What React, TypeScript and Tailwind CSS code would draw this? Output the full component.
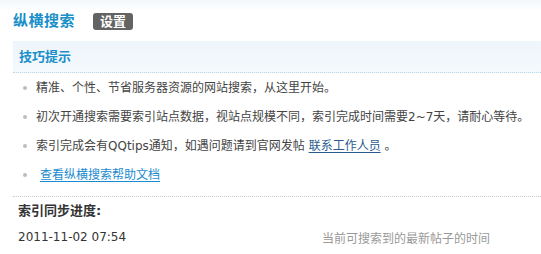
const tips = [
   "精准、个性、节省服务器资源的网站搜索，从这里开始。",
   "初次开通搜索需要索引站点数据，视站点规模不同，索引完成时间需要2~7天，请耐心等待。",
];

const Bullet = () => (
   <span className="w-[4px] h-[4px] rounded-full bg-[#bdbdbd] shrink-0 ml-[10px] mr-[9px]" />
);

const App = () => {
   return (
      <main className="w-[541px] h-[254px] overflow-hidden bg-white text-[12px] text-[#444] font-['DejaVu_Sans','Noto_Sans_CJK_SC',sans-serif]">
         <div className="h-[12px] bg-gradient-to-b from-[#f4f8fb] to-white" />
         <section className="pl-[13px]">
            {/* header */}
            <div className="flex items-center h-[18px]">
               <h3 className="text-[15px] leading-[18px] font-bold tracking-[0.5px] text-[#1b8fc8]">
                  纵横搜索
               </h3>
               <button className="ml-[18px] w-[40px] h-[17px] rounded-[3px] bg-[#636363] text-white text-[13px] leading-[17px] font-bold">
                  设置
               </button>
            </div>

            {/* tips */}
            <div className="mt-[11px] h-[32px] flex items-center pl-[6px] bg-gradient-to-b from-[#eef5fb] to-[#f4f9fd] border-b border-dotted border-[#bcd9ea]">
               <span className="text-[13px] font-bold text-[#1b8fc8]">技巧提示</span>
            </div>
            <ul>
               {tips.map((t) => (
                  <li key={t} className="flex items-center h-[29px]">
                     <Bullet />
                     <span>{t}</span>
                  </li>
               ))}
               <li className="flex items-center h-[29px]">
                  <Bullet />
                  <span>
                     索引完成会有QQtips通知，如遇问题请到官网发帖{" "}
                     <a className="text-[#2a5b8e] underline underline-offset-2">联系工作人员</a> 。
                  </span>
               </li>
               <li className="flex items-center h-[29px]">
                  <Bullet />
                  <a className="ml-[4px] text-[#1a8bd0] underline underline-offset-2">查看纵横搜索帮助文档</a>
               </li>
            </ul>

            {/* sync progress */}
            <div className="mt-[7px] border-t border-dotted border-[#cccccc] pt-[7px] pl-[5px]">
               <p className="font-bold text-[13px] leading-[14px] text-[#333]">索引同步进度:</p>
               <div className="grid grid-cols-[304px_1fr] mt-[12px] leading-[14px]">
                  <span className="text-[#333]">2011-11-02 07:54</span>
                  <span className="text-[#999] pt-[2px]">当前可搜索到的最新帖子的时间</span>
               </div>
            </div>
         </section>
      </main>
   );
};

export default App;
